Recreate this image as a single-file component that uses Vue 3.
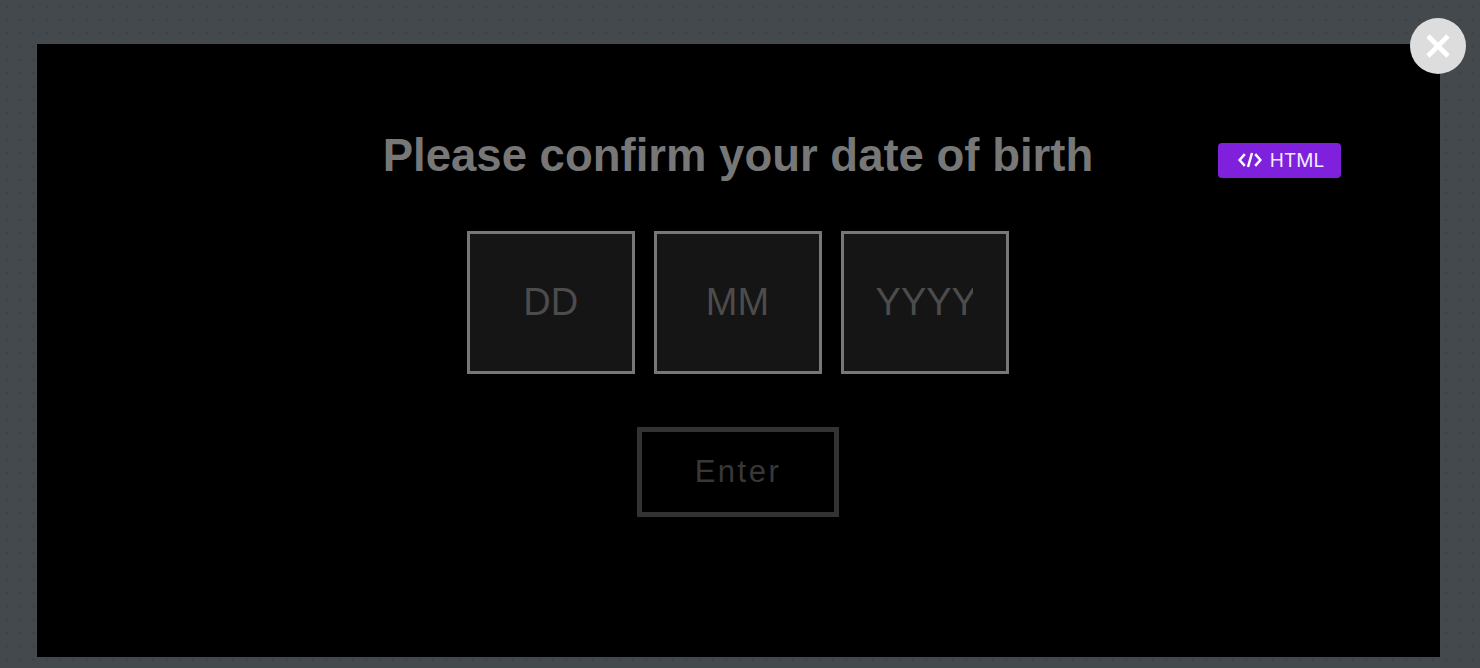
<template>
    <div class="overlay">
        <div class="modal">
            <button class="close" type="button" aria-label="Close">
                <svg viewBox="0 0 24 24" width="24" height="24">
                    <path d="M2 2 L22 22 M22 2 L2 22" fill="none" stroke="#fff" stroke-width="4.8" />
                </svg>
            </button>
            <a class="badge">
                <svg viewBox="0 0 24 16" width="24" height="16">
                    <path d="M6.8 2.2 L1.6 8 L6.8 13.8 M17.2 2.2 L22.4 8 L17.2 13.8 M14 1 L10 15" fill="none" stroke="#fff" stroke-width="2.5" />
                </svg>
                <span>HTML</span>
            </a>
            <h1 class="title">Please confirm your date of birth</h1>
            <div class="fields">
                <label v-for="f in fields" :key="f" class="field">
                    <input type="text" :placeholder="f" />
                </label>
            </div>
            <button class="enter" type="button">Enter</button>
        </div>
    </div>
</template>

<script setup>
const fields = ['DD', 'MM', 'YYYY']
</script>

<style>
html, body {margin: 0; background: #44484c;}
</style>

<style scoped>
.overlay {
    box-sizing: border-box; width: 1480px; height: 668px; padding: 44.4px 40px 11.3px 37px;
    background-color: #44494d;
    background-image: radial-gradient(circle, #3a404c 1px, transparent 1.7px);
    background-size: 13.33px 13.33px;
}
.modal {
    position: relative; box-sizing: border-box; height: 100%; padding-right: 1px; background: #000;
    display: flex; flex-direction: column; align-items: center;
    font-family: "Liberation Sans", Arial, sans-serif;
}
.close {
    position: absolute; top: -26px; right: -26px; width: 56px; height: 56px; padding: 0;
    border: 0; border-radius: 50%; background: #ddd;
    display: flex; align-items: center; justify-content: center;
}
.badge {
    position: absolute; top: 98.6px; left: 1181px; box-sizing: border-box; width: 123px; height: 35px; padding-left: 3px;
    border-radius: 4px; background: #7e20dc; color: #f3eaff;
    display: flex; align-items: center; justify-content: center; gap: 8px;
    font-family: Inter, sans-serif; font-size: 19px;
}
.title {
    margin: 83px 0 0; color: #777; font-size: 45.5px; line-height: 58px; font-weight: 700;
}
.fields {display: flex; gap: 18.3px; margin-top: 46px;}
.field {
    box-sizing: border-box; width: 168.5px; height: 143px; padding: 0 33px 0 32px;
    border: 3px solid #777; background: #151515;
    display: flex; align-items: center;
}
.field input {
    width: 100%; min-width: 0; padding: 0; border: 0; outline: 0; background: transparent; color: #ccc;
    font-family: inherit; font-size: 38px; text-align: center;
}
.field input::placeholder {color: #4c4c4c; opacity: 1;}
.enter {
    box-sizing: border-box; width: 202px; height: 90px; margin-top: 53px; padding: 0;
    border: 5px solid #333; background: #000; color: #383838;
    font-family: inherit; font-size: 31px; letter-spacing: 2.5px;
}
</style>
